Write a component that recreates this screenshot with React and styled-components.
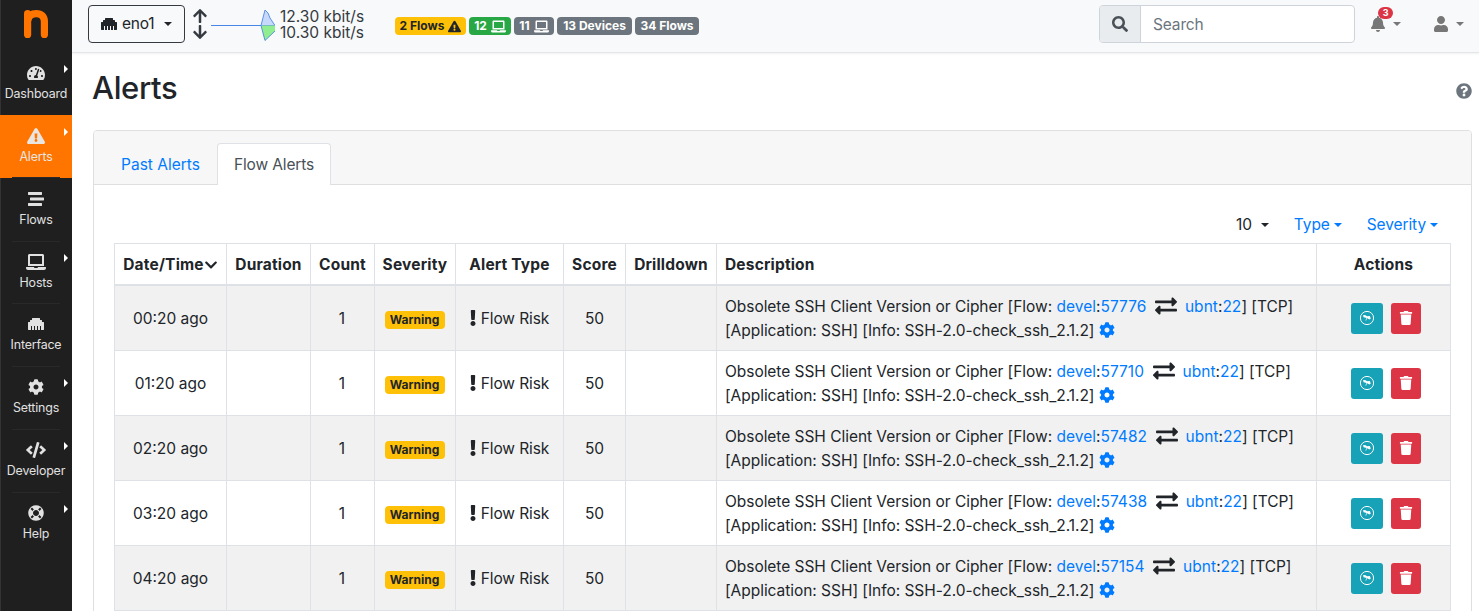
import React from 'react';
import styled, { createGlobalStyle, css } from 'styled-components';
import {
  FaTachometerAlt, FaExclamationTriangle, FaStream, FaLaptop, FaEthernet, FaCog, FaCode, FaLifeRing,
  FaArrowUp, FaArrowDown, FaSearch, FaBell, FaUser, FaQuestionCircle, FaChevronDown, FaExclamation,
  FaExchangeAlt, FaTrash,
} from 'react-icons/fa';

const GlobalStyle = createGlobalStyle`
  *, *::before, *::after { box-sizing: border-box; }
  html, body { margin: 0; height: 611px; overflow: hidden; background: #fff; }
  body {
    font-family: Inter, Roboto, sans-serif;
    font-size: 15.5px;
    line-height: 24px;
    color: #212529;
    letter-spacing: -0.15px;
  }
  svg { display: block; flex: none; }
`;

const Shell = styled.div`
  display: flex;
  width: 1479px;
  height: 611px;
  overflow: hidden;
`;

/* ---------- sidebar ---------- */
const Sidebar = styled.nav`
  width: 72px;
  flex: none;
  background: #1f1f1f;
  box-shadow: inset 1px 0 #333;
`;
const Logo = styled.div`
  height: 52.4px;
  padding: 9px 0 0 23px;
`;
const NavItem = styled.a`
  display: grid;
  grid-template-rows: 20px 22px;
  justify-items: center;
  align-items: center;
  align-content: start;
  height: 62.75px;
  padding-top: 11px;
  position: relative;
  color: ${(p) => (p.$active ? '#e9e6e2' : '#e1e1e1')};
  background: ${(p) => (p.$active ? '#ff7500' : 'transparent')};
  font-size: 12.4px;
  letter-spacing: -0.16px;
  &::after {
    content: '';
    position: absolute;
    left: 12px;
    right: 12px;
    bottom: ${(p) => (p.$active ? 0 : -1)}px;
    height: 1px;
    background: ${(p) => (p.$last ? 'transparent' : '#292929')};
  }
`;
const NavMark = styled.i`
  position: absolute;
  left: 64px;
  top: 13px;
  border: solid transparent;
  border-width: 4px 0 4px 4px;
  border-left-color: #fff;
`;

/* ---------- top bar ---------- */
const Main = styled.main`
  flex: 1;
  min-width: 0;
`;
const TopBar = styled.header`
  display: flex;
  align-items: flex-start;
  height: 53px;
  padding: 5px 15px 0 16px;
  background: #f8f9fb;
  border-bottom: 1px solid #e4e5e8;
  box-shadow: 0 1px 2px rgba(0, 0, 0, 0.06);
`;
const Caret = styled.i`
  flex: none;
  border: solid transparent;
  border-width: 4px 4px 0;
  border-top-color: currentColor;
`;
const IfaceButton = styled.button`
  display: flex;
  align-items: center;
  width: 97px;
  height: 38px;
  padding: 0 0 0 12px;
  font: inherit;
  letter-spacing: -0.2px;
  color: #212529;
  background: transparent;
  border: 1px solid #343a40;
  border-radius: 4px;
  svg { margin-right: 5px; }
  ${Caret} { margin-left: 10px; }
`;
const Arrows = styled.div`
  width: 16px;
  margin: 3px 0 0 7px;
  display: grid;
  gap: 0;
  justify-items: center;
  color: #343a40;
`;
const Spark = styled.svg`
  margin-left: 3px;
`;
const Rates = styled.div`
  width: 115px;
  margin-left: 5px;
  padding-top: 4px;
  line-height: 16px;
  letter-spacing: 0;
  color: #343a40;
`;
const Rate = styled.div`
  height: 16px;
`;
const Badges = styled.div`
  display: flex;
  gap: 3px;
  padding-top: 12px;
`;
const tones = {
  warning: ['#ffc107', '#212529'],
  success: ['#28a745', '#fff'],
  secondary: ['#6c757d', '#fff'],
};
const Badge = styled.span`
  display: inline-flex;
  align-items: center;
  justify-content: center;
  gap: 4px;
  width: ${(p) => p.$w}px;
  height: 18px;
  border-radius: 4px;
  font-size: 12px;
  font-weight: 700;
  letter-spacing: 0;
  line-height: 18px;
  background: ${(p) => tones[p.$tone][0]};
  color: ${(p) => tones[p.$tone][1]};
`;
const SearchGroup = styled.div`
  display: flex;
  width: 256px;
  height: 38px;
  margin-left: auto;
  border: 1px solid #ced4da;
  border-radius: 4px;
  overflow: hidden;
  background: #fff;
`;
const SearchAddon = styled.span`
  width: 41px;
  display: grid;
  place-items: center;
  background: #e9ecef;
  border-right: 1px solid #ced4da;
  color: #495057;
`;
const SearchInput = styled.input`
  flex: 1;
  min-width: 0;
  border: 0;
  padding: 2px 12px 0;
  font: inherit;
  letter-spacing: -0.15px;
  background: transparent;
  &::placeholder { color: #6c757d; opacity: 1; }
`;
const MenuButton = styled.div`
  display: flex;
  align-items: center;
  position: relative;
  height: 38px;
  margin-left: ${(p) => p.$left}px;
  color: #777;
  ${Caret} { margin-left: ${(p) => p.$gap}px; }
`;
const Count = styled.span`
  position: absolute;
  left: 8px;
  top: 2px;
  width: 15px;
  height: 12px;
  border-radius: 6px;
  background: #dc3545;
  color: #fff;
  font-size: 9px;
  font-weight: 700;
  line-height: 12px;
  text-align: center;
`;

/* ---------- page ---------- */
const TitleRow = styled.div`
  display: flex;
  align-items: center;
  justify-content: space-between;
  height: 38px;
  margin: 16px 7px 23px 20px;
  color: #6c757d;
  svg { margin-top: 6px; }
`;
const Title = styled.h1`
  margin: 0;
  font-size: 31px;
  font-weight: 500;
  line-height: 38px;
  letter-spacing: -0.35px;
  color: #212529;
`;
const Card = styled.section`
  width: 1379px;
  height: 600px;
  margin-left: 21px;
  border: 1px solid #dfdfdf;
  border-radius: 4px;
  overflow: hidden;
`;
const Tabs = styled.div`
  display: flex;
  height: 54px;
  padding: 12px 0 0 10px;
  background: #f7f7f7;
  border-bottom: 1px solid #dfdfdf;
`;
const Tab = styled.a`
  display: grid;
  place-items: center;
  width: ${(p) => p.$w}px;
  height: 42px;
  border: 1px solid transparent;
  border-bottom: 0;
  border-radius: 4px 4px 0 0;
  letter-spacing: 0;
  color: #007bff;
  ${(p) => p.$active && css`
    letter-spacing: -0.13px;
    color: #495057;
    background: #fff;
    border-color: #dee2e6;
  `}
`;
const Filters = styled.div`
  display: flex;
  justify-content: flex-end;
  height: 24px;
  margin: 28px 33px 6px 0;
`;
const Filter = styled.a`
  display: flex;
  align-items: center;
  gap: ${(p) => p.$gap}px;
  margin-left: ${(p) => p.$left || 0}px;
  color: ${(p) => (p.$dark ? '#212529' : '#007bff')};
  letter-spacing: -0.1px;
`;

const Table = styled.table`
  display: block;
  width: 1337px;
  margin-left: 20px;
  border: 1px solid #dee2e6;
  border-width: 1px 0 0 1px;
  thead, tbody { display: block; }
`;
const Row = styled.tr`
  display: grid;
  grid-template-columns: 112px 84px 64px 81px 108px 62px 91px 600px 134px;
  height: ${(p) => (p.$head ? 42 : 65)}px;
  background: ${(p) => (p.$odd ? '#f1f1f1' : '#fff')};
`;
const cell = css`
  display: flex;
  align-items: center;
  justify-content: ${(p) => (p.$start ? 'flex-start' : 'center')};
  padding: 2px ${(p) => (p.$start ? 8 : p.$shift || 0)}px 0 ${(p) => (p.$start ? 8 : 0)}px;
  white-space: nowrap;
  border-right: 1px solid #dee2e6;
`;
const HeadCell = styled.th`
  ${cell}
  font-weight: 700;
  letter-spacing: 0.18px;
  border-bottom: 2px solid #dee2e6;
`;
const Cell = styled.td`
  ${cell}
  gap: ${(p) => p.$gap || 0}px;
  letter-spacing: ${(p) => p.$track || '0'};
  border-bottom: 1px solid #dee2e6;
`;
const Severity = styled(Badge)`
  margin-top: 2px;
  margin-right: 1px;
`;
const RiskMark = styled(FaExclamation)`
  margin-top: -2px;
`;
const Description = styled.div`
  line-height: 24px;
  letter-spacing: -0.04px;
`;
const Line = styled.div`
  display: flex;
  align-items: center;
  white-space: pre;
`;
const Link = styled.a`
  color: #007bff;
  letter-spacing: 0.04px;
`;
const Swap = styled.span`
  margin: -2px 8px 0 8.5px;
`;
const Gear = styled.span`
  margin: -2px 0 0 5px;
  color: #007bff;
`;
const ActionCell = styled(Cell)`
  gap: 8px;
  padding: 0 0 0 4px;
`;
const ActionButton = styled.button`
  display: grid;
  place-items: center;
  width: ${(p) => p.$w}px;
  height: 31px;
  padding: 0;
  border: 0;
  border-radius: 3px;
  color: #fff;
  background: ${(p) => p.$bg};
`;

const Telescope = () => (
  <svg width="16" height="16" viewBox="0 0 16 16" fill="none">
    <circle cx="8" cy="8" r="6.6" stroke="#fff" strokeWidth="1" />
    <path d="M4 5.2 L6 5 L8.2 6.3 L10.8 5.9 L11.8 8.4 L10.4 9.4 L7.8 8 L4.6 7.2 Z" fill="#fff" />
    <path d="M7.8 8 L6.8 10.6" stroke="#fff" strokeWidth=".9" opacity=".8" />
  </svg>
);

const nav = [
  ['Dashboard', FaTachometerAlt, 18, true],
  ['Alerts', FaExclamationTriangle, 18, true],
  ['Flows', FaStream, 16, false],
  ['Hosts', FaLaptop, 20, true],
  ['Interface', FaEthernet, 16, false],
  ['Settings', FaCog, 16, true],
  ['Developer', FaCode, 20, true],
  ['Help', FaLifeRing, 16, true],
];

const alerts = [
  ['00:20 ago', '57776'],
  ['01:20 ago', '57710'],
  ['02:20 ago', '57482'],
  ['03:20 ago', '57438'],
  ['04:20 ago', '57154'],
];

function AlertRow({ time, port, odd }) {
  return (
    <Row $odd={odd}>
      <Cell>{time}</Cell>
      <Cell />
      <Cell $shift={1}>1</Cell>
      <Cell><Severity $tone="warning" $w={60}>Warning</Severity></Cell>
      <Cell $shift={5} $track="-0.1px"><RiskMark size={16} />Flow Risk</Cell>
      <Cell>50</Cell>
      <Cell />
      <Cell $start>
        <Description>
          <Line>
            {'Obsolete SSH Client Version or Cipher [Flow: '}
            <Link>devel</Link>:<Link>{port}</Link>
            <Swap><FaExchangeAlt size={22} /></Swap>
            <Link>ubnt</Link>:<Link>22</Link>{'] [TCP]'}
          </Line>
          <Line>
            {'[Application: SSH] [Info: SSH-2.0-check_ssh_2.1.2]'}
            <Gear><FaCog size={16} /></Gear>
          </Line>
        </Description>
      </Cell>
      <ActionCell>
        <ActionButton $w={32} $bg="#17a2b8"><Telescope /></ActionButton>
        <ActionButton $w={30} $bg="#dc3545"><FaTrash size={14} /></ActionButton>
      </ActionCell>
    </Row>
  );
}

export default function App() {
  return (
    <>
      <GlobalStyle />
      <Shell>
        <Sidebar>
          <Logo>
            <svg width="26" height="30" viewBox="0 0 26 30" fill="none" stroke="#ff7500" strokeWidth="7.2" strokeLinecap="round">
              <path d="M4.6 4.6V25.4" />
              <path d="M5 10.6C6 6.4 9.2 4.6 13.2 4.6C18.4 4.6 21.4 7.4 21.4 12.6V25.4" />
            </svg>
          </Logo>
          {nav.map(([label, Icon, size, mark], i) => (
            <NavItem key={label} $active={label === 'Alerts'} $last={i === nav.length - 1}>
              <Icon size={size} />
              {label}
              {mark && <NavMark />}
            </NavItem>
          ))}
        </Sidebar>
        <Main>
          <TopBar>
            <IfaceButton><FaEthernet size={16} />eno1<Caret /></IfaceButton>
            <Arrows><FaArrowUp size={16} /><FaArrowDown size={16} /></Arrows>
            <Spark width="64" height="38" viewBox="0 0 64 38">
              <path d="M50 20.5L54 5L57 8L59 13L64 20.5Z" fill="#c6d9fb" stroke="#4a86e8" strokeWidth=".9" />
              <path d="M50 20.5H64V26L54 35.5Z" fill="#90ee90" />
              <path d="M50 20.5L54 35.5L64 26" fill="none" stroke="#4a86e8" strokeWidth=".9" />
              <path d="M0 20.5H50" stroke="#4a86e8" />
            </Spark>
            <Rates>
              <Rate>12.30 kbit/s</Rate>
              <Rate>10.30 kbit/s</Rate>
            </Rates>
            <Badges>
              <Badge $tone="warning" $w={71}>2 Flows <FaExclamationTriangle size={13} /></Badge>
              <Badge $tone="success" $w={42}>12 <FaLaptop size={15} /></Badge>
              <Badge $tone="secondary" $w={40}>11 <FaLaptop size={15} /></Badge>
              <Badge $tone="secondary" $w={75}>13 Devices</Badge>
              <Badge $tone="secondary" $w={64}>34 Flows</Badge>
            </Badges>
            <SearchGroup>
              <SearchAddon><FaSearch size={16} /></SearchAddon>
              <SearchInput placeholder="Search" />
            </SearchGroup>
            <MenuButton $left={15} $gap={7}><FaBell size={16} /><Count>3</Count><Caret /></MenuButton>
            <MenuButton $left={32} $gap={7}><FaUser size={16} /><Caret /></MenuButton>
          </TopBar>
          <TitleRow>
            <Title>Alerts</Title>
            <FaQuestionCircle size={16} />
          </TitleRow>
          <Card>
            <Tabs>
              <Tab $w={113}>Past Alerts</Tab>
              <Tab $w={114} $active>Flow Alerts</Tab>
            </Tabs>
            <Filters>
              <Filter $dark $gap={9}>10<Caret /></Filter>
              <Filter $gap={4} $left={25}>Type<Caret /></Filter>
              <Filter $gap={4} $left={25}>Severity<Caret /></Filter>
            </Filters>
            <Table>
              <thead>
                <Row $head>
                  <HeadCell>Date/Time<FaChevronDown size={14} /></HeadCell>
                  <HeadCell>Duration</HeadCell>
                  <HeadCell>Count</HeadCell>
                  <HeadCell>Severity</HeadCell>
                  <HeadCell>Alert Type</HeadCell>
                  <HeadCell>Score</HeadCell>
                  <HeadCell>Drilldown</HeadCell>
                  <HeadCell $start>Description</HeadCell>
                  <HeadCell>Actions</HeadCell>
                </Row>
              </thead>
              <tbody>
                {alerts.map(([time, port], i) => (
                  <AlertRow key={port} time={time} port={port} odd={i % 2 === 0} />
                ))}
              </tbody>
            </Table>
          </Card>
        </Main>
      </Shell>
    </>
  );
}
